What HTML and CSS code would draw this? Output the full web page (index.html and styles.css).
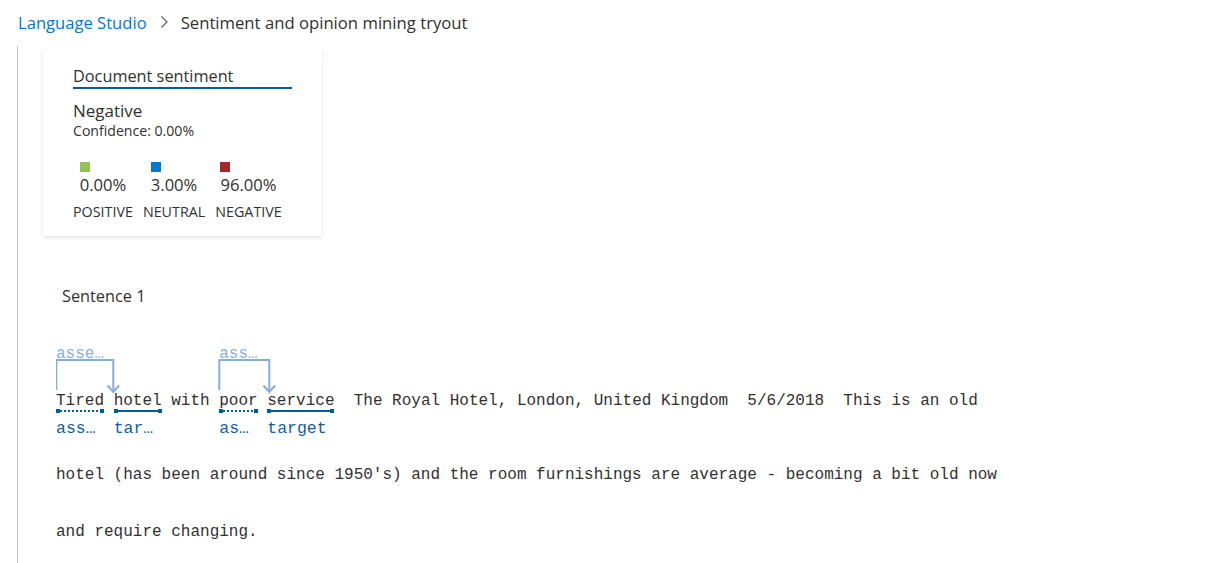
FILE: index.html
```html
<!DOCTYPE html>
<html lang="en">
<head>
<meta charset="utf-8">
<title>Sentiment and opinion mining tryout</title>
<link rel="stylesheet" href="styles.css">
</head>
<body>
<header class="crumbs">
  <a class="crumb-link" href="#">Language Studio</a>
  <svg class="chev" width="10" height="14" viewBox="0 0 10 14"><path d="M2.5 1.5 L8 7 L2.5 12.5" fill="none" stroke="#605e5c" stroke-width="1.2"/></svg>
  <span class="crumb-current">Sentiment and opinion mining tryout</span>
</header>
<main class="main">
  <section class="card">
    <div class="card-head">Document sentiment</div>
    <div class="label-big">Negative</div>
    <div class="conf">Confidence: 0.00%</div>
    <div class="scores">
      <div class="score">
        <div class="val"><span class="sq green"></span>0.00%</div>
        <div class="cap">POSITIVE</div>
      </div>
      <div class="score">
        <div class="val"><span class="sq blue"></span>3.00%</div>
        <div class="cap">NEUTRAL</div>
      </div>
      <div class="score">
        <div class="val"><span class="sq red"></span>96.00%</div>
        <div class="cap">NEGATIVE</div>
      </div>
    </div>
  </section>

  <div class="sentence-title">Sentence 1</div>

  <div class="text">
    <div class="row1">
      <svg class="links" width="240" height="50" viewBox="0 0 240 50">
        <path d="M0.3 46 V16 H57.3 V47.5" fill="none" stroke="#84afd8" stroke-width="2"/>
        <path d="M51.5 41.5 L57.3 48 L63.1 41.5" fill="none" stroke="#84afd8" stroke-width="2"/>
        <path d="M163.3 46 V16 H213.3 V47.5" fill="none" stroke="#84afd8" stroke-width="2"/>
        <path d="M207.5 41.5 L213.3 48 L219.1 41.5" fill="none" stroke="#84afd8" stroke-width="2"/>
      </svg>
      <span class="tok"><span class="top">asse…</span><span class="w">Tired</span><span class="ul dot"></span><span class="bot">ass…</span></span>
      <span class="tok"><span class="top"></span><span class="w"> </span></span>
      <span class="tok"><span class="top"></span><span class="w">hotel</span><span class="ul"></span><span class="bot">tar…</span></span>
      <span class="tok"><span class="top"></span><span class="w"> with </span></span>
      <span class="tok"><span class="top">ass…</span><span class="w">poor</span><span class="ul dot"></span><span class="bot">as…</span></span>
      <span class="tok"><span class="top"></span><span class="w"> </span></span>
      <span class="tok"><span class="top"></span><span class="w">service</span><span class="ul"></span><span class="bot">target</span></span>
      <span class="tok"><span class="top"></span><span class="w">  The Royal Hotel, London, United Kingdom  5/6/2018  This is an old</span></span>
    </div>
    <div class="row row2">hotel (has been around since 1950's) and the room furnishings are average - becoming a bit old now</div>
    <div class="row row3">and require changing.</div>
  </div>
</main>
</body>
</html>
```

FILE: styles.css
```css
html, body {
  margin: 0;
  padding: 0;
  background: #ffffff;
}
body {
  font-family: "Open Sans", "Noto Sans", sans-serif;
  color: #323130;
  width: 1210px;
  height: 563px;
  overflow: hidden;
}
.crumbs {
  height: 44px;
  display: flex;
  align-items: center;
  padding-left: 18px;
  font-size: 16.6px;
}
.crumb-link {
  color: #0078d4;
  text-decoration: none;
}
.chev {
  margin: 0 12px 0 12px;
}
.crumb-current {
  color: #323130;
  font-size: 16.7px;
}
.main {
  margin-left: 17px;
  margin-top: 2px;
  border-left: 1px solid #c8c6c4;
  padding-top: 3px;
  height: 517px;
  box-sizing: border-box;
}
.card {
  margin-left: 25px;
  width: 279px;
  box-sizing: border-box;
  padding: 17px 30px 15px;
  background: #fff;
  box-shadow: 0 1.6px 3.6px rgba(0,0,0,0.13), 0 0.3px 0.9px rgba(0,0,0,0.11);
}
.card-head {
  font-size: 16.3px;
  line-height: 21px;
  border-bottom: 2px solid #005a9e;
}
.label-big {
  margin-top: 10px;
  font-size: 17px;
  line-height: 23px;
}
.conf {
  font-size: 14.1px;
  line-height: 18px;
}
.scores {
  margin-top: 22px;
  display: flex;
  gap: 10px;
}
.score {
  display: flex;
  flex-direction: column;
  align-items: center;
}
.val {
  font-size: 16.6px;
  line-height: 20px;
}
.sq {
  display: block;
  width: 10px;
  height: 10px;
  margin-bottom: 3px;
}
.green { background: #92c353; }
.blue { background: #0078d4; }
.red { background: #a4262c; }
.cap {
  margin-top: 8px;
  font-size: 14.3px;
  line-height: 18px;
}
.sentence-title {
  margin-top: 49px;
  margin-left: 44px;
  font-size: 16.3px;
  line-height: 22px;
}
.text {
  margin-left: 38px;
  font-family: "Liberation Mono", "DejaVu Sans Mono", monospace;
  font-size: 16px;
  color: #323130;
}
.row1 {
  position: relative;
  margin-top: 37px;
  display: flex;
  align-items: flex-start;
}
.links {
  position: absolute;
  left: 0;
  top: 0;
}
.tok {
  display: flex;
  flex-direction: column;
  white-space: pre;
}
.top {
  height: 47px;
  line-height: 20px;
  color: #86b0d8;
}
.w {
  line-height: 20px;
}
.ul {
  margin-top: -2px;
  height: 4px;
  display: flex;
  justify-content: space-between;
  background: linear-gradient(#005a9e, #005a9e) center / 100% 2px no-repeat;
}
.ul.dot {
  background: repeating-linear-gradient(to right, #005a9e 0 2px, transparent 2px 4px) center / 100% 2px no-repeat;
}
.ul::before,
.ul::after {
  content: "";
  width: 4px;
  height: 4px;
  background: #005a9e;
}
.bot {
  margin-top: 6px;
  line-height: 20px;
  font-size: 16.5px;
  color: #0f5ca3;
}
.row {
  white-space: pre;
  line-height: 20px;
}
.row2 {
  margin-top: 26px;
}
.row3 {
  margin-top: 37px;
}
```
